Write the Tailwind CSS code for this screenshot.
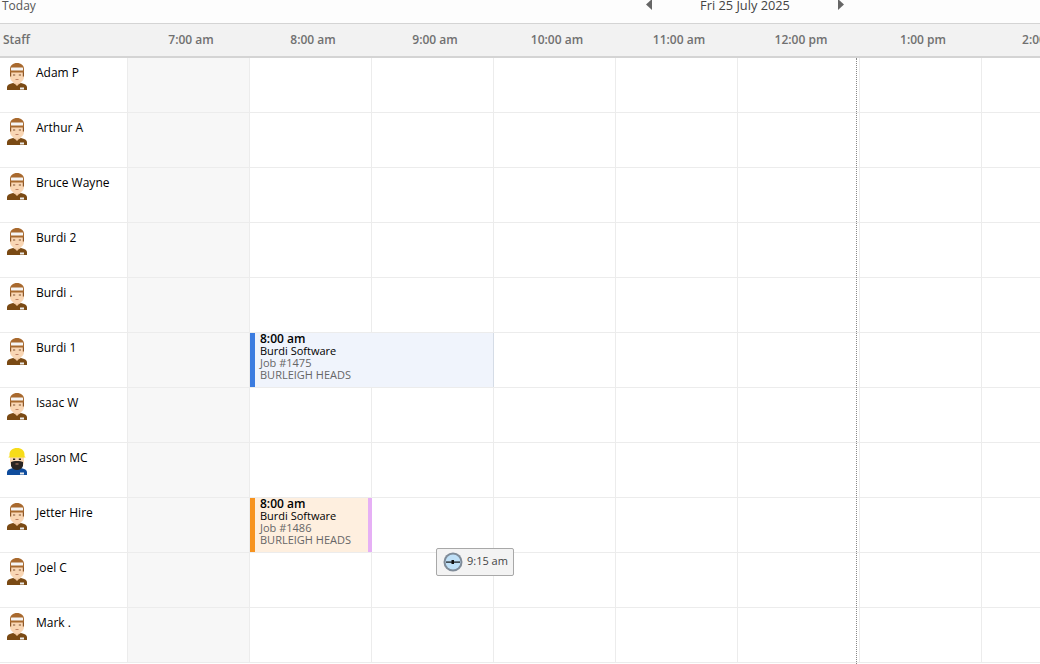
<!DOCTYPE html>
<html lang="en">
<head>
    <meta charset="UTF-8">
    <meta name="viewport" content="width=device-width, initial-scale=1.0">
    <title>Schedule</title>
    <script src="https://cdn.jsdelivr.net/npm/@tailwindcss/browser@4"></script>
</head>
<body class="bg-white h-[664px] w-[1040px] overflow-hidden font-['Open_Sans',sans-serif] text-[12px]">
    <svg class="hidden">
        <symbol id="tech" viewBox="0 0 20 27">
            <path d="M0 27v-3c0-2 2.500-3.200 6-4l4 1.500 4-1.500c3.500.8 6 2 6 4v3z" fill="#7a4a14"/>
            <path d="M6.500 18h7v1.500L10 23 6.500 19.500z" fill="#f3c9a0"/>
            <rect x="13" y="24.500" width="4" height="2" fill="#ececec"/>
            <path d="M3 9h14v5c0 3.500-3.500 6.500-7 6.500S3 17.500 3 14z" fill="#f9d6b4"/>
            <path d="M3 9h1.200v4.500H3zM15.800 9H17v4.500h-1.200z" fill="#8a5426"/>
            <path d="M3 9.500V6c0-3.500 3-6 7-6s7 2.500 7 6v3.500z" fill="#a8692e"/>
            <rect x="4" y="4.500" width="12" height="3" rx="0.500" fill="#f5f5f5"/>
            <rect x="6" y="11.500" width="2.200" height="1" fill="#7a5235"/>
            <rect x="11.800" y="11.500" width="2.200" height="1" fill="#7a5235"/>
            <rect x="8.500" y="16" width="3" height="1" fill="#c08468"/>
        </symbol>
        <symbol id="builder" viewBox="0 0 20 27">
            <path d="M0 27v-3c0-2 2.500-3.200 6-4h8c3.500.8 6 2 6 4v3z" fill="#0f4c9c"/>
            <rect x="13" y="24.500" width="4" height="2" fill="#ececec"/>
            <path d="M3 8h14v6c0 3.500-3.500 6.500-7 6.500S3 17.500 3 14z" fill="#f9d6b4"/>
            <path d="M4 14c1.500-1.500 10.500-1.500 12 0v4c-1 2.500-3.200 4-6 4s-5-1.500-6-4z" fill="#2a2522"/>
            <rect x="8.500" y="15.500" width="3" height="1" fill="#c08468"/>
            <rect x="6" y="10.500" width="2.200" height="1.500" fill="#2a2522"/>
            <rect x="11.800" y="10.500" width="2.200" height="1.500" fill="#2a2522"/>
            <path d="M1.500 9.500c0-.7.500-1 1-1V6.500C2.500 2.500 5.500 0 10 0s7.500 2.500 7.500 6.500v2c.5 0 1 .3 1 1z" fill="#f7dc1a"/>
        </symbol>
    </svg>

    <!-- Date bar -->
    <div class="h-[24px] flex items-start bg-[#fdfdfd] border-b border-[#d4d4d4] text-[#555] leading-[12px]">
        <div class="w-[645px] pl-[2px]">Today</div>
        <svg class="w-[8px] h-[12px] mt-[-1px]" viewBox="0 0 8 12"><path d="M7 0v11L1 5.500z" fill="#666"/></svg>
        <div class="w-[184px] mt-[-1px] text-center text-[#444] text-[12.800px]">Fri 25 July 2025</div>
        <svg class="w-[8px] h-[12px] mt-[-1px]" viewBox="0 0 8 12"><path d="M1 0v11l6-5.500z" fill="#666"/></svg>
    </div>

    <!-- Time header -->
    <div class="h-[34px] flex items-center bg-[#f2f2f2] border-b-2 border-[#d4d4d4] font-semibold text-[#707070] whitespace-nowrap">
        <div class="w-[128px] shrink-0 pl-[3px]">Staff</div>
        <div class="w-[122px] shrink-0 pl-[4px] text-center">7:00 am</div>
        <div class="w-[122px] shrink-0 pl-[4px] text-center">8:00 am</div>
        <div class="w-[122px] shrink-0 pl-[4px] text-center">9:00 am</div>
        <div class="w-[122px] shrink-0 pl-[4px] text-center">10:00 am</div>
        <div class="w-[122px] shrink-0 pl-[4px] text-center">11:00 am</div>
        <div class="w-[122px] shrink-0 pl-[4px] text-center">12:00 pm</div>
        <div class="w-[122px] shrink-0 pl-[4px] text-center">1:00 pm</div>
        <div class="w-[122px] shrink-0 pl-[4px] text-center">2:00 pm</div>
    </div>

    <!-- Rows -->
    <div class="relative">
        <div id="rows"></div>

        <!-- Current time line -->
        <div class="absolute top-0 left-[856px] h-[620px] border-l border-dotted border-[#888]"></div>

        <!-- Burdi 1 job -->
        <div class="absolute left-[250px] top-[275px] w-[244px] h-[54px] bg-[#f0f4fc] border-l-[5px] border-l-[#3b7ce0] border-r border-r-[#d5dce6] pl-[5px] text-[11px] leading-[12px]">
            <div class="text-[12px] font-semibold text-black">8:00 am</div>
            <div class="text-black">Burdi Software</div>
            <div class="text-[#666]">Job #1475</div>
            <div class="text-[#666]">BURLEIGH HEADS</div>
        </div>

        <!-- Jetter Hire job -->
        <div class="absolute left-[250px] top-[440px] w-[122px] h-[54px] bg-[#feefdf] border-l-[5px] border-l-[#f7931e] border-r-[4px] border-r-[#e6b0f5] pl-[5px] text-[11px] leading-[12px] whitespace-nowrap">
            <div class="text-[12px] font-semibold text-black">8:00 am</div>
            <div class="text-black">Burdi Software</div>
            <div class="text-[#666]">Job #1486</div>
            <div class="text-[#666]">BURLEIGH HEADS</div>
        </div>

        <!-- Drag time tooltip -->
        <div class="absolute left-[436px] top-[490px] w-[78px] h-[28px] flex items-center gap-[4px] pl-[6px] bg-[#f3f3f3] border border-[#a8a8a8] rounded-[2px] text-[11px] text-[#444]">
            <svg class="w-[20px] h-[20px] shrink-0" viewBox="0 0 20 20">
                <circle cx="10" cy="10" r="9.500" fill="#7f8b98"/>
                <circle cx="10" cy="10" r="7.500" fill="#bfe0f7"/>
                <path d="M3 9.500h14v1.200H3z" fill="#111"/>
                <path d="M8.500 8h2.500v4H8.500z" fill="#111"/>
            </svg>
            <span class="mt-[-1px]">9:15 am</span>
        </div>
    </div>

    <script>
        // staff list for the grid, Jason is the only one with the builder icon
        var staff = ['Adam P', 'Arthur A', 'Bruce Wayne', 'Burdi 2', 'Burdi .', 'Burdi 1', 'Isaac W', 'Jason MC', 'Jetter Hire', 'Joel C', 'Mark .'];
        var html = '';
        staff.forEach(function (name) {
            var icon = name === 'Jason MC' ? 'builder' : 'tech';
            var cells = '';
            for (var i = 0; i < 7; i++) {
                cells += '<div class="w-[122px] shrink-0 border-r border-[#ececec]"></div>';
            }
            html += '<div class="h-[55px] flex border-b border-[#ececec]">' +
                '<div class="w-[128px] shrink-0 flex items-start border-r border-[#ececec] pl-[7px] pt-[5px]">' +
                '<svg class="w-[20px] h-[27px] shrink-0"><use href="#' + icon + '"></use></svg>' +
                '<span class="ml-[9px] text-black leading-[19px]">' + name + '</span></div>' +
                '<div class="w-[122px] shrink-0 bg-[#f7f7f7] border-r border-[#ececec]"></div>' +
                cells + '</div>';
        });
        document.getElementById('rows').innerHTML = html;
    </script>
</body>
</html>
